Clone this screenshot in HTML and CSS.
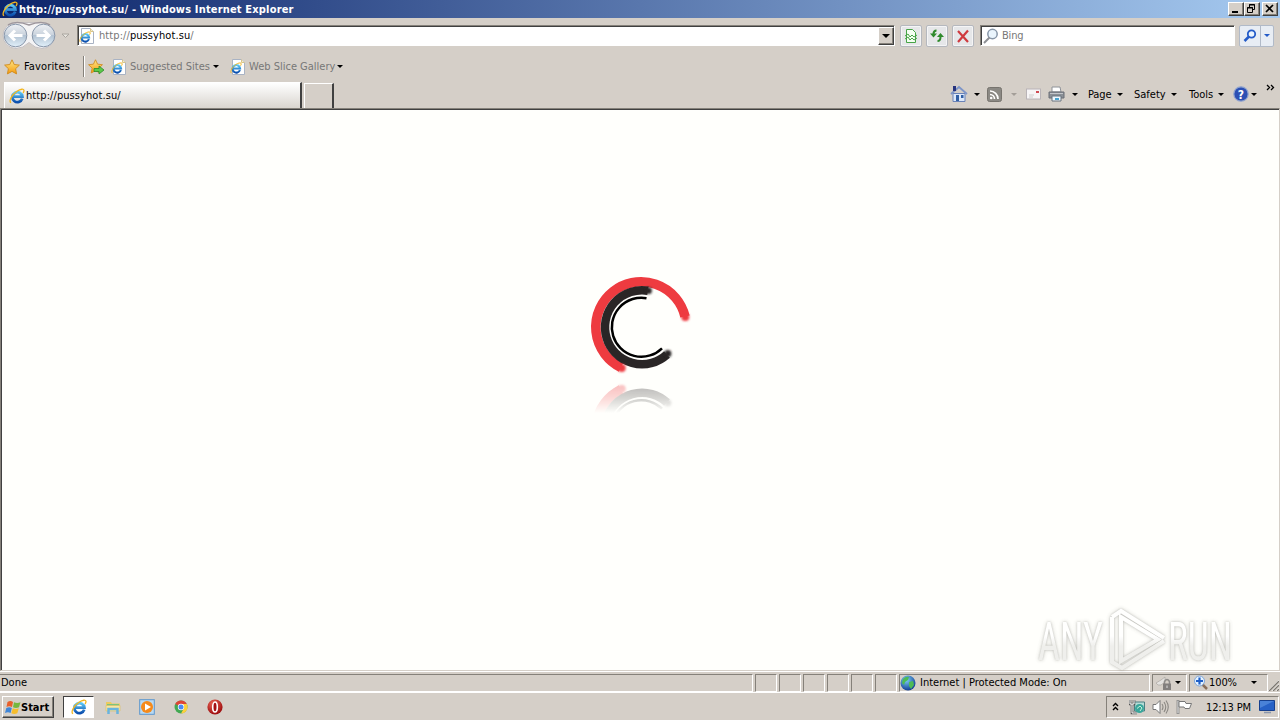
FILE: index.html
```html
<!DOCTYPE html>
<html lang="en">
<head>
  <meta charset="UTF-8" />
  <title>http://pussyhot.su/ - Windows Internet Explorer</title>
  <link rel="stylesheet" href="styles.css">
</head>
<body>
  <svg class="defs" width="0" height="0">
    <defs>
      <linearGradient id="ieBlue" x1="0" y1="0" x2="0" y2="1">
        <stop offset="0" stop-color="#5cc8f5" />
        <stop offset="1" stop-color="#0c4fae" />
      </linearGradient>
      <linearGradient id="arrowFill" x1="0" y1="0" x2="0" y2="1">
        <stop offset="0" stop-color="#eef1f5" />
        <stop offset=".48" stop-color="#c9d2dc" />
        <stop offset=".5" stop-color="#b3c3d3" />
        <stop offset="1" stop-color="#e2f1fb" />
      </linearGradient>
      <linearGradient id="starFill" x1="0" y1="0" x2="0" y2="1">
        <stop offset="0" stop-color="#ffe98a" />
        <stop offset="1" stop-color="#f59a0c" />
      </linearGradient>
      <radialGradient id="globeFill" cx=".4" cy=".3" r=".7">
        <stop offset="0" stop-color="#7fd0f5" />
        <stop offset="1" stop-color="#123f96" />
      </radialGradient>
      <radialGradient id="redFill" cx=".4" cy=".3" r=".7">
        <stop offset="0" stop-color="#ee6a5a" />
        <stop offset="1" stop-color="#9c0a0c" />
      </radialGradient>
      <symbol id="ie" viewBox="0 0 16 16">
        <path d="M13.2 10.600A5 5 0 1 1 13.400 8.600H4.600" fill="none" stroke="url(#ieBlue)" stroke-width="2.800" />
        <path d="M2 14.800C-.6 13 3 6.400 8 3.200 11.500 1 15 .4 15 2.600 15 3.500 14.500 4.400 14 5" fill="none" stroke="#f3b61f" stroke-width="1.300" />
      </symbol>
      <symbol id="iePage" viewBox="0 0 16 16">
        <path d="M2.500.5h9l3 3v12h-12z" fill="#fff" stroke="#a9b3c4" />
        <path d="M11.500.5v3h3" fill="#fdf0c0" stroke="#d8c48a" />
        <use href="#ie" x="0" y="3" width="12" height="12" />
      </symbol>
      <symbol id="star" viewBox="0 0 16 16">
        <path d="M8 .8l2.200 4.700 5.200.6-3.800 3.600 1 5.200L8 12.400l-4.600 2.500 1-5.200L.6 6.100l5.200-.6z" fill="url(#starFill)" stroke="#cf8a1c" stroke-width=".9" />
      </symbol>
    </defs>
  </svg>

  <header class="titlebar">
    <svg class="title-icon" width="16" height="16"><use href="#ie" /></svg>
    <span class="title">http://pussyhot.su/ - Windows Internet Explorer</span>
    <div class="win-buttons">
      <span class="win-btn"><svg width="13" height="11"><path d="M3 8h6v2H3z" /></svg></span>
      <span class="win-btn restore"><svg width="13" height="11"><path d="M4.500 5V1.500h5v5H8M4 2h6M2.500 4.500h5v5h-5zM2 5h6" fill="none" stroke="#000" /></svg></span>
      <span class="win-btn"><svg width="13" height="11"><path d="M3 2l7 7M10 2L3 9" stroke="#000" stroke-width="1.700" /></svg></span>
    </div>
  </header>

  <nav class="navbar">
    <svg class="arrows" width="56" height="29" viewBox="0 0 56 29">
      <path d="M15 1.500h26a13 13 0 0 1 0 26q-7 0-13-6-6 6-13 6a13 13 0 0 1 0-26z" fill="#f4f4f5" stroke="#c4c0c2" />
      <path d="M7 4Q15-1 28 4 41-1 49 4" fill="none" stroke="#9e979d" stroke-width="1.500" />
      <circle cx="14.500" cy="14.500" r="11.300" fill="url(#arrowFill)" stroke="#8997aa" />
      <circle cx="42.500" cy="14.500" r="11.300" fill="url(#arrowFill)" stroke="#8997aa" />
      <path d="M21.500 14.500H9M14 9.500l-5 5 5 5M35.500 14.500H48M43 9.500l5 5-5 5" fill="none" stroke="#fff" stroke-width="3" />
    </svg>
    <svg class="recent" width="9" height="6"><path d="M1 1h7L4.500 4.500z" fill="#e9e6e0" stroke="#aaa6a0" /></svg>
    <div class="address">
      <svg width="16" height="16"><use href="#iePage" /></svg>
      <span class="url">http://<b>pussyhot.su</b>/</span>
      <span class="drop"><i class="caret"></i></span>
    </div>
    <div class="tool-btn">
      <svg width="16" height="16"><path d="M3.500 1.500h6l3 3v10h-9z" fill="#f4fff2" stroke="#47a447" /><path d="M2 8l3-2 2 3 2-2 2 2 3-2M2 11l3-2 2 3 2-2 2 2 3-2" fill="none" stroke="#47a447" /></svg>
    </div>
    <div class="tool-btn">
      <svg width="16" height="16"><path d="M7.500 2.500Q4.500 2.500 4.500 6M8.500 13q3 0 3-4" fill="none" stroke="#2f8a2c" stroke-width="2" /><path d="M1 5.500h7L4.500 9.500zM8 9h7l-3.500-4z" fill="#2f8a2c" /></svg>
    </div>
    <div class="tool-btn">
      <svg width="16" height="16"><path d="M3 3l10 11M13 2.500L3 14" stroke="#cf3a3f" stroke-width="2.200" /></svg>
    </div>
    <div class="search">
      <svg width="16" height="16"><circle cx="9.500" cy="6" r="4.700" fill="#eaf5fd" stroke="#8796a8" stroke-width="1.500" /><path d="M6.500 9.500L1 15" stroke="#8d8f94" stroke-width="2" /></svg>
      <span class="placeholder">Bing</span>
    </div>
    <div class="search-go">
      <span class="go"><svg width="14" height="14"><circle cx="8.500" cy="5" r="3.700" fill="#eaf4ff" stroke="#245bc8" stroke-width="1.800" /><path d="M6 7.500L1.500 12" stroke="#245bc8" stroke-width="2.500" /></svg></span>
      <span class="go-drop"><i class="caret blue"></i></span>
    </div>
  </nav>

  <div class="favbar">
    <svg width="16" height="16"><use href="#star" /></svg>
    <span class="label favorites">Favorites</span>
    <span class="divider"></span>
    <svg width="17" height="16"><use href="#star" width="15" height="15" /><path d="M6 9.500h5V7l5 4-5 4v-2.500H6z" fill="#5cc94a" stroke="#2c8a28" stroke-width=".8" /></svg>
    <svg class="page-icon" width="16" height="16"><use href="#iePage" /></svg>
    <span class="label link suggested">Suggested Sites</span><i class="caret"></i>
    <svg class="page-icon gallery-icon" width="16" height="16"><use href="#iePage" /></svg>
    <span class="label link gallery">Web Slice Gallery</span><i class="caret"></i>
  </div>

  <div class="tabbar">
    <div class="tab">
      <svg width="16" height="16"><use href="#ie" /></svg>
      <span class="label tab-title">http://pussyhot.su/</span>
    </div>
    <div class="new-tab"></div>
    <div class="commands">
      <svg width="18" height="18" class="cmd-home"><path d="M3 8.500h12v8H3z" fill="#dce8fa" stroke="#6a83b8" /><path d="M1 9l8-7 8 7" fill="none" stroke="#7d95c8" stroke-width="1.800" /><path d="M3 1h3v5H3z" fill="#27347e" /><path d="M6 10h3v6H6zM11 10h2.500v3H11z" fill="#315fa4" /></svg>
      <i class="caret"></i>
      <svg width="15" height="15" class="cmd-rss"><rect x=".5" y=".5" width="14" height="14" rx="2" fill="#8b8984" stroke="#77746e" /><path d="M3 4a8 8 0 0 1 8 8M3 7.500a4.500 4.500 0 0 1 4.500 4.500" fill="none" stroke="#fff" stroke-width="1.700" /><circle cx="4.200" cy="11" r="1.300" fill="#fff" /></svg>
      <i class="caret dim"></i>
      <svg width="15" height="12" class="cmd-mail"><rect x=".5" y="1" width="14" height="10" fill="#f7f5f6" stroke="#b9b4b7" /><path d="M3 7h5M3 9h4" stroke="#ccc" /><path d="M10 3h3v2h-3z" fill="#d04a52" /></svg>
      <svg width="17" height="16" class="cmd-print"><path d="M4 1h8l1 5H4z" fill="#fff" stroke="#8e9298" /><path d="M1 6h15v6H1z" fill="#8a8f96" stroke="#6a6f77" /><path d="M2 7.500h13" stroke="#c3c6ca" /><path d="M4 10h9v5H4z" fill="#eef8ff" stroke="#6b747e" /><path d="M7 12h4v2H7z" fill="#4aa4cf" /></svg>
      <i class="caret"></i>
      <span class="label cmd-page">Page</span><i class="caret"></i>
      <span class="label cmd-safety">Safety</span><i class="caret"></i>
      <span class="label cmd-tools">Tools</span><i class="caret"></i>
      <svg width="16" height="16" class="cmd-help"><circle cx="8" cy="8" r="7.200" fill="#2c50b4" stroke="#8fa3cf" stroke-width="1.200" /><text x="8" y="12.500" class="help-mark">?</text></svg>
      <i class="caret"></i>
      <svg width="9" height="8" class="cmd-more"><path d="M1 1l2.500 2.500L1 6M5 1l2.500 2.500L5 6" fill="none" stroke="#000" stroke-width="1.300" /></svg>
    </div>
  </div>

  <main class="page">
    <svg class="loader" width="140" height="170" viewBox="570 260 140 170">
      <defs>
        <filter id="soft" x="-10%" y="-10%" width="120%" height="120%"><feGaussianBlur stdDeviation=".5" /></filter>
        <filter id="tip" x="-100%" y="-100%" width="300%" height="300%"><feGaussianBlur stdDeviation="1.200" /></filter>
        <linearGradient id="fade" gradientUnits="userSpaceOnUse" x1="0" y1="384" x2="0" y2="413">
          <stop offset="0" stop-color="#fff" stop-opacity=".34" />
          <stop offset=".5" stop-color="#fff" stop-opacity=".19" />
          <stop offset="1" stop-color="#fff" stop-opacity="0" />
        </linearGradient>
        <mask id="fadeMask" maskUnits="userSpaceOnUse" x="570" y="380" width="140" height="50">
          <rect x="570" y="380" width="140" height="50" fill="url(#fade)" />
        </mask>
        <g id="rings">
          <g fill="none" filter="url(#soft)">
            <path d="M685 316.500A45.200 45.200 0 1 0 621 367.500" stroke="#ee3a41" stroke-width="9.600" />
            <path d="M648 290.700A37 37 0 1 0 667 354.500" stroke="#2c2728" stroke-width="8.500" />
            <path d="M646.500 298.200A29.500 29.500 0 1 0 662 348.300" stroke="#000" stroke-width="2.500" />
          </g>
          <g filter="url(#tip)">
            <circle cx="685.300" cy="317" r="4" fill="#ee3a41" />
            <circle cx="621.700" cy="368" r="4" fill="#ee3a41" />
            <circle cx="648.500" cy="290.700" r="3.400" fill="#2c2728" />
            <circle cx="667.800" cy="353.700" r="3.600" fill="#2c2728" />
          </g>
        </g>
      </defs>
      <use href="#rings" />
      <g mask="url(#fadeMask)"><use href="#rings" transform="matrix(1 0 0 -1 0 757)" /></g>
    </svg>
  </main>

  <footer class="statusbar">
    <div class="pane done"><span class="label">Done</span></div>
    <div class="pane slot"></div>
    <div class="pane slot"></div>
    <div class="pane slot"></div>
    <div class="pane slot"></div>
    <div class="pane slot"></div>
    <div class="pane slot"></div>
    <div class="pane zone">
      <svg width="16" height="16"><circle cx="8" cy="8" r="7.500" fill="url(#globeFill)" /><path d="M3 4q3-3 6-2l-1 3-3 2-1 3-2-2zM9 7l4-1 1 4-3 4-2-3z" fill="#4dbb55" /></svg>
      <span class="label">Internet | Protected Mode: On</span>
    </div>
    <div class="pane privacy">
      <svg width="18" height="16"><path d="M1 8l5-3 4-3v5l-4 3H3z" fill="#e4e2e0" stroke="#aaa6a0" stroke-width=".7" /><path d="M9.500 9V6.500q2.500-4 5 0V9" fill="none" stroke="#8e8c8a" stroke-width="1.500" /><path d="M8 8.500h8V15H8z" fill="#827f7e" /><path d="M12 10.500v2.500" stroke="#ddd" /></svg>
      <i class="caret"></i>
    </div>
    <div class="pane zoom">
      <svg width="16" height="16"><path d="M9 9l5 5" stroke="#8a6f5a" stroke-width="2.500" /><circle cx="6.500" cy="6" r="5" fill="#e4f2ff" stroke="#7fa5d8" /><path d="M6.500 2.500v7M3 6h7" stroke="#1f5fc8" stroke-width="2.200" /></svg>
      <span class="label zoom-value">100%</span><i class="caret"></i>
    </div>
    <svg class="grip" width="11" height="12"><path d="M0 12L11 1M4 12l7-7M8 12l3-3" stroke="#fff" /><path d="M1 12L11 2M5 12l6-6M9 12l2-2" stroke="#7d7972" stroke-width="1.300" /></svg>
  </footer>

  <div class="taskbar">
    <div class="start">
      <svg width="17" height="16"><path d="M2.500 3q3-2 5.500 0L7 8Q4 6.500 1.500 8z" fill="#e8602c" /><path d="M9 3.300q3 1.500 6.500 0l-1.500 5q-3 1.500-6 0z" fill="#76b83f" /><path d="M1.300 9q3-1.500 5.500 0l-1.200 5Q3 12.500 0 14z" fill="#3f86d8" /><path d="M7.800 9.300q3 1.500 6 0l-1.500 5q-3 1.500-6 0z" fill="#f6bd2c" /></svg>
      <span>Start</span>
    </div>
    <div class="task active"><svg width="16" height="16"><use href="#ie" /></svg></div>
    <svg class="launch" width="16" height="16"><path d="M1 3h5l1 1.500h8V10H1z" fill="#eccb5f" /><path d="M2 5h12v3H2z" fill="#7cc47e" /><path d="M1 6.500h14V12H1z" fill="#f8e7a0" stroke="#dcc06b" stroke-width=".7" /><path d="M3.500 15v-5h9v5" fill="none" stroke="#69b4de" stroke-width="2.500" /></svg>
    <svg class="launch" width="16" height="16"><rect x=".7" y=".7" width="14.600" height="14.600" fill="#b9daf3" stroke="#5d97cd" /><circle cx="8" cy="8" r="6" fill="#f58a1b" /><path d="M6 4.500v7L12 8z" fill="#fff" /></svg>
    <svg class="launch" width="16" height="16"><circle cx="8" cy="8" r="6.500" fill="#42a852" /><path d="M8 8L2.200 5A6.500 6.500 0 0 1 13.900 5.200z" fill="#de4436" /><path d="M8 5h5.800A6.500 6.500 0 0 1 8 14.500L11 9z" fill="#fdd03c" /><circle cx="8" cy="8" r="3.200" fill="#fff" /><circle cx="8" cy="8" r="2.500" fill="#4a8af4" /></svg>
    <svg class="launch" width="16" height="16"><circle cx="8" cy="8" r="7.600" fill="url(#redFill)" /><ellipse cx="8" cy="8" rx="2.300" ry="5" fill="#a51014" stroke="#fff" stroke-width="1.600" /></svg>
    <div class="tray">
      <svg width="7" height="10" class="tray-up"><path d="M1 4l2.500-2.500L6 4M1 8l2.500-2.500L6 8" fill="none" stroke="#000" stroke-width="1.400" /></svg>
      <svg width="16" height="16" class="tray-net"><path d="M5.500 3h10v9h-10z" fill="#b5dcd6" stroke="#4c7f83" /><path d="M1 1v4h4V1M3 5v9h5" fill="none" stroke="#555" stroke-width="2.600" /><path d="M1 1v4h4V1M3 5v9h5" fill="none" stroke="#fff" /><circle cx="10.500" cy="9.500" r="4.500" fill="#38a69b" /><path d="M8 9.500l3-2.500 2 2-2 3" fill="none" stroke="#c6f1d9" /></svg>
      <svg width="17" height="16" class="tray-sound"><path d="M1 5.500h3l4-4v13l-4-4H1z" fill="#fff" stroke="#777" /><path d="M10 5q2 3 0 6M12 3q3.500 5 0 10M14 1.500q4.500 6.500 0 13" fill="none" stroke="#8a8782" stroke-width="1.100" /></svg>
      <svg width="17" height="16" class="tray-flag"><path d="M2 1v14" stroke="#707070" stroke-width="2.600" /><path d="M2 1.500v13" stroke="#fff" /><path d="M3 2.500h6l1 2h5.500l-2 5H9l-1-1.500H3z" fill="#fff" stroke="#777" /></svg>
      <span class="label clock">12:13 PM</span>
      <svg width="16" height="14" class="tray-desk"><path d="M.5.5h15v10H.5z" fill="#2761c6" stroke="#17408e" /><path d="M1 1h14L1 8z" fill="#4a82d8" /><path d="M5 12.500h7" stroke="#8a96ac" stroke-width="1.500" /></svg>
    </div>
  </div>

  <svg class="watermark" width="210" height="70" viewBox="1030 605 210 70">
    <defs>
      <linearGradient id="markFill" gradientUnits="userSpaceOnUse" x1="0" y1="622" x2="0" y2="662">
        <stop offset=".35" stop-color="#fff" />
        <stop offset=".6" stop-color="#ededea" />
      </linearGradient>
    </defs>
    <g class="mark-text">
      <text x="1038" y="660" textLength="65" lengthAdjust="spacingAndGlyphs">ANY</text>
      <text x="1168" y="660" textLength="64" lengthAdjust="spacingAndGlyphs">RUN</text>
    </g>
    <g class="mark-shape">
      <path d="M1121 617v44l37-21.500z" />
      <path d="M1112 617v45l10 6 42-27" />
      <path d="M1112 617l9-6 43 27" />
    </g>
  </svg>
</body>
</html>
```

FILE: styles.css
```css
* {
  box-sizing: border-box;
}

body {
  margin: 0;
  width: 1280px;
  height: 720px;
  overflow: hidden;
  display: flex;
  flex-direction: column;
  background: #d5cfc8;
  color: #000;
  font-family: "DejaVu Sans Condensed", "DejaVu Sans", sans-serif;
  font-stretch: condensed;
  font-size: 11px;
  line-height: 14px;
  white-space: nowrap;
}

svg {
  flex: none;
  display: block;
}

.defs {
  position: absolute;
}

.label {
  flex: none;
}

.caret {
  flex: none;
  width: 0;
  height: 0;
  border: 3px solid transparent;
  border-top-color: #000;
  border-bottom: 0;
}

.caret.dim {
  border-top-color: #a39e98;
}

.caret.blue {
  border-top-color: #245bc8;
}

/* title bar */
.titlebar {
  height: 18px;
  flex: none;
  display: flex;
  align-items: center;
  padding: 0 2px;
  background: linear-gradient(90deg, #0c246a, #a6caf0);
}

.title {
  color: #fff;
  font-weight: bold;
  margin-left: 1px;
  padding-top: 1px;
  letter-spacing: 0.17px;
}

.win-buttons {
  margin-left: auto;
  display: flex;
}

.win-btn {
  width: 16px;
  height: 14px;
  background: #d5cfc8;
  border: 1px solid;
  border-color: #fff #404040 #404040 #fff;
  box-shadow: inset -1px -1px #85817a;
}

.restore {
  margin-right: 2px;
}

/* address row */
.navbar {
  height: 35px;
  flex: none;
  display: flex;
  align-items: center;
}

.arrows {
  margin-left: 1px;
}

.recent {
  margin: 0 7px 0 4px;
}

.address,
.search {
  height: 21px;
  display: flex;
  align-items: center;
  background: #fff;
  border: 1px solid;
  border-color: #85817a #fff #fff #85817a;
  box-shadow: inset 1px 1px #404040;
}

.address {
  width: 818px;
  padding-left: 1px;
}

.url {
  margin-left: 4px;
  padding-top: 1px;
  color: #777;
  letter-spacing: 0.08px;
}

.url b {
  color: #000;
  font-weight: normal;
}

.drop {
  margin-left: auto;
  width: 16px;
  height: 18px;
  display: flex;
  align-items: center;
  justify-content: center;
  background: #d5cfc8;
  border: 1px solid;
  border-color: #fff #404040 #404040 #fff;
  box-shadow: inset -1px -1px #85817a;
}

.drop .caret {
  border-width: 4px 4px 0;
}

.tool-btn {
  width: 22px;
  height: 22px;
  margin-left: 4px;
  display: flex;
  align-items: center;
  justify-content: center;
  background: #e6e7e9;
  border: 1px solid #b5b8be;
  border-radius: 2px;
  box-shadow: inset 0 0 0 1px #f5f5f6;
}

.address + .tool-btn {
  margin-left: 5px;
}

.search {
  width: 255px;
  margin-left: 6px;
  padding-left: 2px;
}

.placeholder {
  margin-left: 3px;
  padding-top: 1px;
  color: #777;
  letter-spacing: -0.2px;
}

.search-go {
  width: 35px;
  height: 22px;
  margin-left: 4px;
  display: flex;
  background: #e8edf4;
  border: 1px solid #b1bac8;
  border-radius: 2px;
}

.go,
.go-drop {
  display: flex;
  align-items: center;
  justify-content: center;
}

.go {
  width: 21px;
  border-right: 1px solid #b1bac8;
}

.go-drop {
  width: 12px;
}

/* favorites row */
.favbar {
  height: 27px;
  flex: none;
  display: flex;
  align-items: center;
  padding-left: 4px;
}

.favorites {
  width: 59px;
  margin-left: 4px;
  letter-spacing: 0.15px;
}

.divider {
  width: 2px;
  height: 21px;
  margin-right: 3px;
  border-left: 1px solid #85817a;
  border-right: 1px solid #fff;
}

.page-icon {
  margin-left: 6px;
}

.link {
  margin-left: 3px;
  padding-top: 1px;
  color: #777;
}

.suggested {
  width: 83px;
}

.gallery-icon {
  margin-left: 11px;
}

.gallery {
  width: 88px;
}

/* tabs and command bar */
.tabbar {
  height: 28px;
  flex: none;
  display: flex;
  align-items: flex-end;
  padding-left: 4px;
}

.tab {
  width: 298px;
  height: 26px;
  display: flex;
  align-items: center;
  padding-left: 4px;
  background: linear-gradient(#fff, #d9d5cf);
  border: 1px solid #fff;
  border-right: 2px solid #404040;
  border-bottom: 0;
}

.tab-title {
  margin-left: 1px;
  padding-top: 1px;
  letter-spacing: 0.08px;
}

.new-tab {
  width: 30px;
  height: 25px;
  margin-left: 2px;
  border: 1px solid #fff;
  border-right: 2px solid #404040;
  border-bottom: 0;
}

.commands {
  height: 28px;
  flex: 1;
  display: flex;
  align-items: center;
  padding-left: 616px;
}

.commands .label {
  padding-top: 1px;
}

.cmd-home {
  margin-right: 6px;
}

.cmd-rss {
  margin: 0 9px 0 7px;
}

.cmd-mail {
  margin-left: 9px;
}

.cmd-print {
  margin: 0 7px 0 7px;
}

.cmd-page {
  width: 29px;
  margin-left: 10px;
  letter-spacing: -0.1px;
}

.cmd-safety {
  width: 37px;
  margin-left: 11px;
}

.cmd-tools {
  width: 29px;
  margin-left: 12px;
}

.cmd-help {
  margin: 0 2px 0 9px;
}

.help-mark {
  fill: #fff;
  font-size: 12px;
  font-weight: bold;
  text-anchor: middle;
}

.cmd-more {
  margin: -12px 0 0 9px;
}

/* page area */
.page {
  height: 563px;
  flex: none;
  display: flex;
  justify-content: center;
  align-items: flex-start;
  padding-top: 151px;
  background: #fffffc;
  border: 1px solid;
  border-color: #85817a #d5cfc8 #d5cfc8 #85817a;
  box-shadow: inset 1px 1px #404040;
}

/* status bar */
.statusbar {
  height: 22px;
  flex: none;
  display: flex;
  align-items: center;
  gap: 2px;
  padding-top: 1px;
  border-top: 1px solid #fff;
  border-bottom: 1px solid #fff;
}

.pane {
  height: 18px;
  flex: none;
  display: flex;
  align-items: center;
  border: 1px solid;
  border-color: #85817a #fff #fff #85817a;
}

.pane .label {
  padding-top: 1px;
}

.done {
  width: 753px;
  border-left: 0;
  padding-left: 1px;
}

.slot {
  width: 22px;
}

.zone {
  width: 251px;
}

.zone .label {
  margin-left: 4px;
}

.privacy {
  width: 35px;
  padding-left: 2px;
  gap: 2px;
}

.zoom {
  width: 79px;
  padding-left: 3px;
}

.zoom-value {
  width: 42px;
  letter-spacing: -0.1px;
}

.grip {
  margin: 5px 0 0 -2px;
}

/* task bar */
.taskbar {
  height: 27px;
  flex: none;
  display: flex;
  align-items: center;
  padding: 1px 0 0 2px;
}

.start {
  width: 52px;
  height: 22px;
  display: flex;
  align-items: center;
  padding-left: 2px;
  font-weight: bold;
  border: 1px solid;
  border-color: #fff #404040 #404040 #fff;
  box-shadow: inset -1px -1px #85817a;
}

.start span {
  margin-left: -1px;
  padding-top: 1px;
}

.task {
  width: 31px;
  height: 22px;
  margin-left: 9px;
  margin-right: -7px;
  display: flex;
  align-items: center;
  justify-content: center;
}

.task.active {
  background: #fff;
  border: 1px solid;
  border-color: #404040 #fff #fff #404040;
}

.launch {
  margin-left: 18px;
}

.tray {
  width: 173px;
  height: 22px;
  margin-left: auto;
  margin-right: 1px;
  display: flex;
  align-items: center;
  padding-left: 5px;
  border: 1px solid;
  border-color: #85817a #fff #fff #85817a;
}

.tray-net {
  margin-left: 10px;
}

.tray-sound {
  margin-left: 7px;
}

.tray-flag {
  margin-left: 7px;
}

.clock {
  width: 46px;
  margin-left: 13px;
  padding-top: 1px;
  letter-spacing: -0.15px;
}

.tray-desk {
  margin-left: 7px;
}

/* watermark over the page */
.watermark {
  position: absolute;
  left: 1030px;
  top: 605px;
  overflow: visible;
  opacity: 0.85;
  filter: drop-shadow(0 0 1px rgba(90, 90, 80, 0.35)) drop-shadow(0 0 2px rgba(90, 90, 80, 0.25));
}

.mark-text {
  fill: url(#markFill);
  font-family: Roboto, sans-serif;
  font-size: 53px;
}

.mark-shape {
  fill: none;
  stroke: url(#markFill);
  stroke-width: 4px;
}
```
